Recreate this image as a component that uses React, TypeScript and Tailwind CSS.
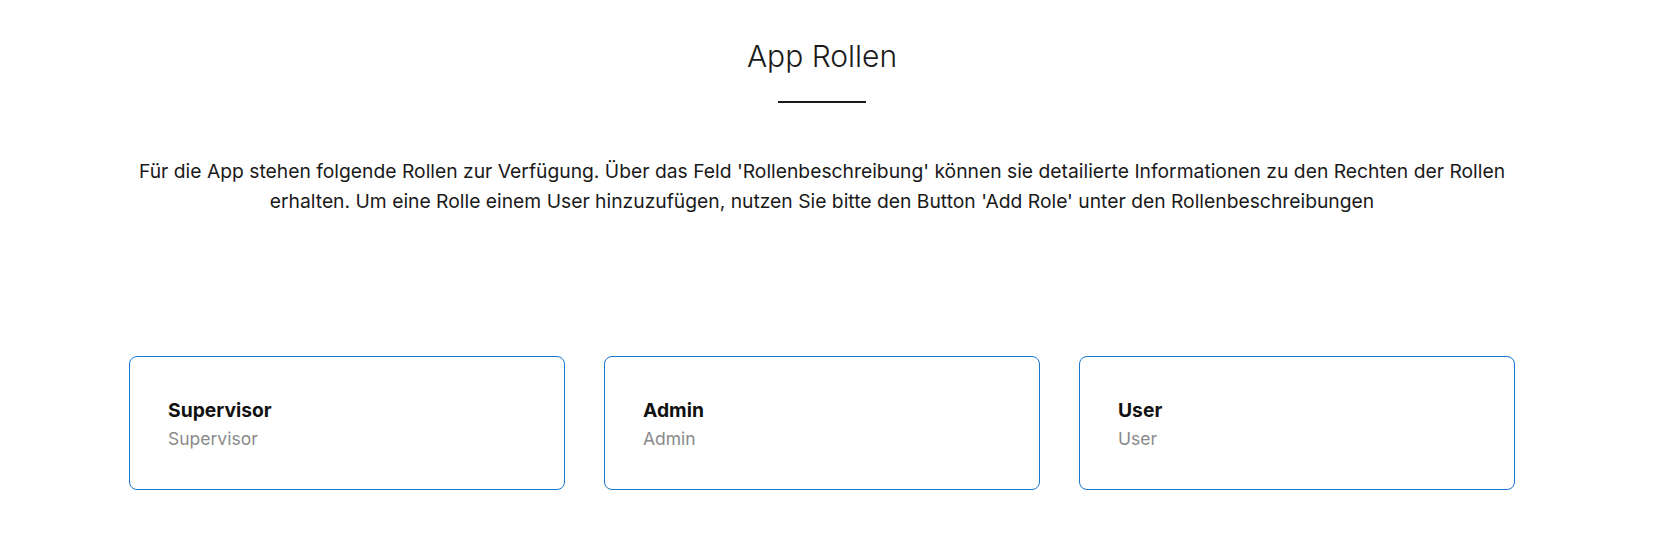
export default function App() {
  const roles = ["Supervisor", "Admin", "User"];
  return (
    <div className="w-[1678px] h-[547px] bg-white" style={{ fontFamily: "Inter, 'Noto Sans', sans-serif" }}>
      <div className="w-[1644px] pt-[36px]">
        <div className="w-[1386px] mx-auto flex flex-col items-center">
          <h1 className="text-[30px] leading-[40px] font-light text-[#1a1a1a]">App Rollen</h1>
          <div className="mt-[25px] w-[88px] h-[2px] bg-[#1a1a1a]" />
          <p className="mt-[53px] text-[19.3px] leading-[30px] text-[#1a1a1a] text-center">
            Für die App stehen folgende Rollen zur Verfügung. Über das Feld 'Rollenbeschreibung' können sie detailierte Informationen zu den Rechten der Rollen
            <br />
            erhalten. Um eine Rolle einem User hinzuzufügen, nutzen Sie bitte den Button 'Add Role' unter den Rollenbeschreibungen
          </p>
          <div className="mt-[140px] w-full grid grid-cols-3 gap-[39px]">
            {roles.map((r) => (
              <div key={r} className="h-[134px] border border-[#1976d2] rounded-[8px] pl-[38px] pt-[2px] flex flex-col justify-center">
                <div className="text-[19.3px] leading-[26px] font-bold text-[#111]">{r}</div>
                <div className="mt-[3px] text-[17.5px] leading-[26px] text-[#8a8a8a]">{r}</div>
              </div>
            ))}
          </div>
        </div>
      </div>
    </div>
  );
}
